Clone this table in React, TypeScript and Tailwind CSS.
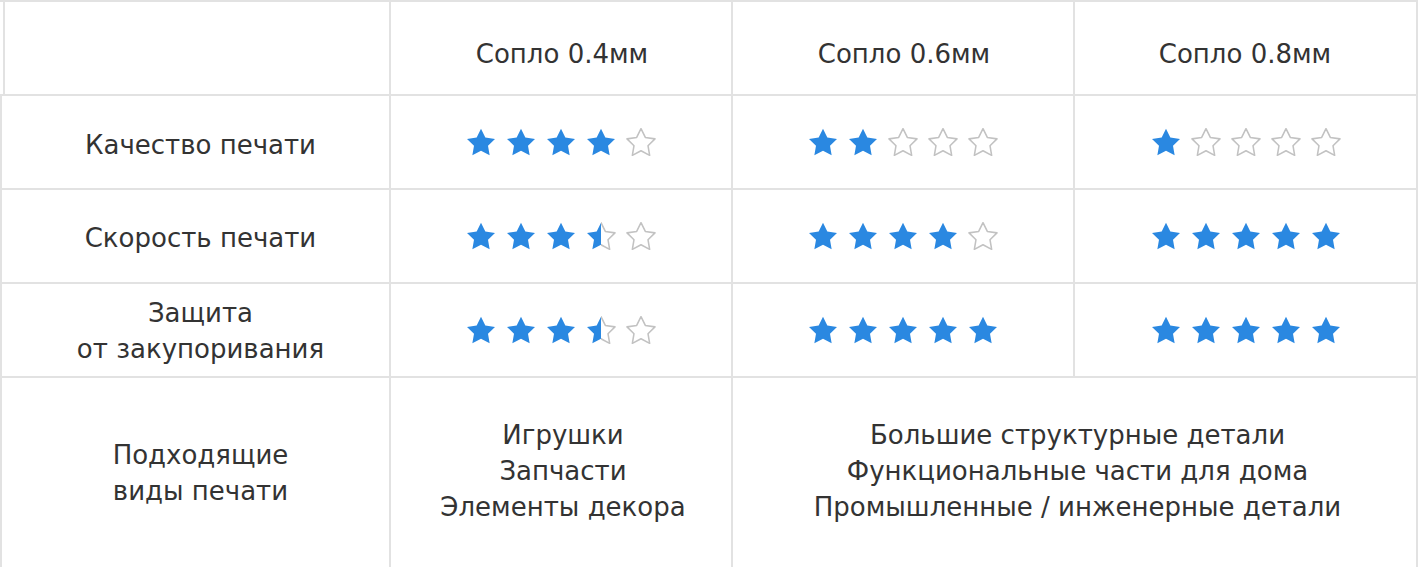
import { useId } from "react";

const STAR = "M12 2l3.09 6.26L22 9.27l-5 4.87 1.18 6.88L12 17.77l-6.18 3.25L7 14.14 2 9.27l6.91-1.01L12 2z";

type StarKind = "full" | "half" | "empty";

const Star = ({ kind }: { kind: StarKind }) => {
  const id = useId().replace(/:/g, "");
  return (
    <svg viewBox="1.5 1.5 21 20" className="h-[28px] w-[30px]">
      <defs>
        <clipPath id={`l${id}`}>
          <rect x="0" y="0" width="12" height="24" />
        </clipPath>
        <clipPath id={`r${id}`}>
          <rect x="12" y="0" width="12" height="24" />
        </clipPath>
      </defs>
      {kind === "full" ? <path d={STAR} fill="#2a88e1" /> : null}
      {kind === "empty" ? (
        <path d={STAR} fill="none" stroke="#c2c2c2" strokeWidth="1.1" strokeLinejoin="round" />
      ) : null}
      {kind === "half" ? (
        <>
          <path d={STAR} fill="#2a88e1" clipPath={`url(#l${id})`} />
          <path
            d={STAR}
            fill="none"
            stroke="#c2c2c2"
            strokeWidth="1.1"
            strokeLinejoin="round"
            clipPath={`url(#r${id})`}
          />
        </>
      ) : null}
    </svg>
  );
};

const Rating = ({ value }: { value: number }) => {
  const stars: StarKind[] = [0, 1, 2, 3, 4].map((i) =>
    value >= i + 1 ? "full" : value > i ? "half" : "empty"
  );
  return (
    <div className="flex items-center gap-[10px]">
      {stars.map((k, i) => (
        <Star key={i} kind={k} />
      ))}
    </div>
  );
};

const cell = "flex items-center justify-center border-r-2 border-b-2 border-[#e2e2e2] text-center";

const rows: { label: string[]; values: number[]; pad: string }[] = [
  { label: ["Качество печати"], values: [4, 2, 1], pad: "pt-[6px]" },
  { label: ["Скорость печати"], values: [3.5, 4, 5], pad: "pt-[4px]" },
  { label: ["Защита", "от закупоривания"], values: [3.5, 5, 5], pad: "pt-[2px]" },
];

export default function App() {
  return (
    <div
      className="h-[567px] w-[1418px] overflow-hidden bg-white text-[26px] leading-[36px] text-[#333]"
      style={{ fontFamily: '"DejaVu Sans", Verdana, sans-serif' }}
    >
      <div className="grid grid-cols-[391px_342px_342px_343px] border-t-2 border-[#e2e2e2]">
        <div className="h-[94px] border-r-2 border-b-2 border-[#e2e2e2] pl-[3px]">
          <div className="h-full border-l-2 border-[#e2e2e2]" />
        </div>
        <div className={`${cell} h-[94px] pt-[12px] pl-[2px]`}>Сопло 0.4мм</div>
        <div className={`${cell} h-[94px] pt-[12px] pl-[2px]`}>Сопло 0.6мм</div>
        <div className={`${cell} h-[94px] pt-[12px] pr-[1px]`}>Сопло 0.8мм</div>

        {rows.map((row) => (
          <div key={row.label.join(" ")} className="contents">
            <div className={`${cell} h-[94px] border-l-2 pl-[10px] ${row.pad}`}>
              <div>
                {row.label.map((l) => (
                  <div key={l}>{l}</div>
                ))}
              </div>
            </div>
            {row.values.map((v, i) => (
              <div key={i} className={`${cell} h-[94px]`}>
                <Rating value={v} />
              </div>
            ))}
          </div>
        ))}

        <div className={`${cell} h-[192px] border-l-2 pl-[10px]`}>
          <div>
            <div>Подходящие</div>
            <div>виды печати</div>
          </div>
        </div>
        <div className={`${cell} h-[192px] pb-[4px] pl-[4px]`}>
          <div>
            <div>Игрушки</div>
            <div>Запчасти</div>
            <div>Элементы декора</div>
          </div>
        </div>
        <div className={`${cell} col-span-2 h-[192px] pb-[4px] pl-[6px]`}>
          <div>
            <div>Большие структурные детали</div>
            <div>Функциональные части для дома</div>
            <div>Промышленные / инженерные детали</div>
          </div>
        </div>
      </div>
    </div>
  );
}
